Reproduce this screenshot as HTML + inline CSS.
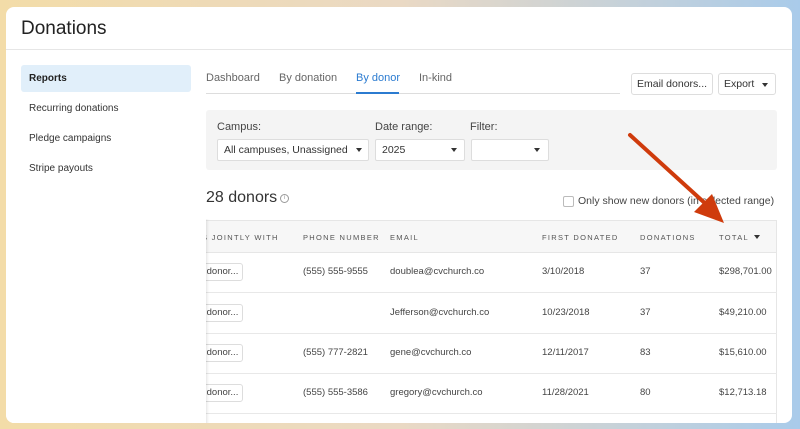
<!DOCTYPE html>
<html><head><meta charset="utf-8"><style>
*{margin:0;padding:0;box-sizing:border-box}
body{width:800px;height:429px;overflow:hidden;font-family:"Liberation Sans",sans-serif;color:#333;background:linear-gradient(90deg,#f3dca8 0%,#ead9c4 50%,#a9cbea 100%);position:relative}
.card{position:absolute;left:6px;top:7px;width:786px;height:416px;background:#fff;border-radius:8px;overflow:hidden}
.abs{position:absolute;white-space:nowrap}
.h1{left:15px;top:11px;font-size:19px;color:#222}
.hb{left:0;top:42px;width:786px;height:1px;background:#e6e6e6}
.side{font-size:10px;color:#333}
.tab{font-size:11px;color:#666;top:65px}
.btn{border:1px solid #ddd;border-radius:3px;background:#fff;font-size:10.5px;color:#333;height:22px;line-height:20px;padding:0 5px;overflow:hidden}
.sel{background:#fff;border:1px solid #ddd;border-radius:2px;height:22px;font-size:10.5px;line-height:20px;padding-left:6px;color:#333;overflow:hidden}
.tri{position:absolute;width:0;height:0;border-left:3px solid transparent;border-right:3px solid transparent;border-top:4px solid #333}
.th{font-size:7.5px;letter-spacing:1.3px;color:#555;top:226px}
.td{font-size:9.5px;color:#444}
.row{left:195px;width:576px;height:1px;background:#e8e8e8}
.dbtn{border:1px solid #ddd;border-radius:3px;height:18px;width:44px;font-size:9.5px;line-height:16px;padding-left:4px;color:#444;background:#fff;overflow:hidden}
</style></head><body>
<div class="card">
<div class="abs h1">Donations</div>
<div class="abs hb"></div>
<div class="abs" style="left:195px;top:213px;width:576px;height:33px;background:#f7f7f7;border-top:1px solid #e6e6e6;border-bottom:1px solid #e6e6e6"></div>
<div class="abs" style="left:770px;top:213px;width:1px;height:210px;background:#e6e6e6"></div>
<div class="abs th" style="left:196px">S JOINTLY WITH</div>
<div class="abs th" style="left:297px">PHONE NUMBER</div>
<div class="abs th" style="left:384px">EMAIL</div>
<div class="abs th" style="left:536px">FIRST DONATED</div>
<div class="abs th" style="left:634px">DONATIONS</div>
<div class="abs th" style="left:713px">TOTAL</div>
<div class="tri" style="left:748px;top:228px"></div>

<div class="abs row" style="top:285px"></div>
<div class="abs row" style="top:326px"></div>
<div class="abs row" style="top:366px"></div>
<div class="abs row" style="top:406px"></div>

<div class="abs dbtn" style="left:193px;top:256px">&nbsp;donor...</div>
<div class="abs dbtn" style="left:193px;top:297px">&nbsp;donor...</div>
<div class="abs dbtn" style="left:193px;top:337px">&nbsp;donor...</div>
<div class="abs dbtn" style="left:193px;top:377px">&nbsp;donor...</div>

<div class="abs td" style="left:297px;top:259px">(555) 555-9555</div>
<div class="abs td" style="left:384px;top:259px">doublea@cvchurch.co</div>
<div class="abs td" style="left:536px;top:259px">3/10/2018</div>
<div class="abs td" style="left:634px;top:259px">37</div>
<div class="abs td" style="left:713px;top:259px">$298,701.00</div>

<div class="abs td" style="left:384px;top:300px">Jefferson@cvchurch.co</div>
<div class="abs td" style="left:536px;top:300px">10/23/2018</div>
<div class="abs td" style="left:634px;top:300px">37</div>
<div class="abs td" style="left:713px;top:300px">$49,210.00</div>

<div class="abs td" style="left:297px;top:340px">(555) 777-2821</div>
<div class="abs td" style="left:384px;top:340px">gene@cvchurch.co</div>
<div class="abs td" style="left:536px;top:340px">12/11/2017</div>
<div class="abs td" style="left:634px;top:340px">83</div>
<div class="abs td" style="left:713px;top:340px">$15,610.00</div>

<div class="abs td" style="left:297px;top:380px">(555) 555-3586</div>
<div class="abs td" style="left:384px;top:380px">gregory@cvchurch.co</div>
<div class="abs td" style="left:536px;top:380px">11/28/2021</div>
<div class="abs td" style="left:634px;top:380px">80</div>
<div class="abs td" style="left:713px;top:380px">$12,713.18</div>

<div class="abs" style="left:0;top:212px;width:200px;height:211px;background:#fff;box-shadow:1px 0 3px rgba(0,0,0,0.12);clip-path:inset(0 -6px 0 0)"></div>

<div class="abs" style="left:15px;top:58px;width:170px;height:27px;background:#e1effa;border-radius:3px"></div>
<div class="abs side" style="left:23px;top:66px;font-weight:bold;color:#222">Reports</div>
<div class="abs side" style="left:23px;top:96px">Recurring donations</div>
<div class="abs side" style="left:23px;top:126px">Pledge campaigns</div>
<div class="abs side" style="left:23px;top:156px">Stripe payouts</div>

<div class="abs" style="left:200px;top:86px;width:414px;height:1px;background:#ddd"></div>
<div class="abs tab" style="left:200px">Dashboard</div>
<div class="abs tab" style="left:273px">By donation</div>
<div class="abs tab" style="left:350px;color:#2b7bd0">By donor</div>
<div class="abs" style="left:350px;top:85px;width:43px;height:2px;background:#2b7bd0"></div>
<div class="abs tab" style="left:413px">In-kind</div>

<div class="abs btn" style="left:625px;top:66px;width:82px">Email donors...</div>
<div class="abs btn" style="left:712px;top:66px;width:58px">Export</div>
<div class="tri" style="left:756px;top:76px"></div>

<div class="abs" style="left:200px;top:103px;width:571px;height:60px;background:#f4f4f4;border-radius:3px"></div>
<div class="abs" style="left:211px;top:114px;font-size:11px;color:#444">Campus:</div>
<div class="abs" style="left:369px;top:114px;font-size:11px;color:#444">Date range:</div>
<div class="abs" style="left:464px;top:114px;font-size:11px;color:#444">Filter:</div>
<div class="abs sel" style="left:211px;top:132px;width:152px">All campuses, Unassigned</div>
<div class="tri" style="left:350px;top:141px"></div>
<div class="abs sel" style="left:369px;top:132px;width:90px">2025</div>
<div class="tri" style="left:445px;top:141px"></div>
<div class="abs sel" style="left:465px;top:132px;width:78px"></div>
<div class="tri" style="left:528px;top:141px"></div>

<div class="abs" style="left:200px;top:182px;font-size:16px;color:#333">28 donors</div>
<div class="abs" style="left:274px;top:187px;width:9px;height:9px;border:1px solid #999;border-radius:50%;font-size:6px;line-height:7px;text-align:center;color:#999">i</div>
<div class="abs" style="left:557px;top:189px;width:11px;height:11px;border:1px solid #bbb;border-radius:2px;background:#fff"></div>
<div class="abs" style="left:572px;top:188px;font-size:10.5px;color:#444">Only show new donors (in selected range)</div>
</div>
<svg class="abs" style="left:0;top:0" width="800" height="429">
<line x1="630" y1="135" x2="708" y2="206" stroke="#cf3b0c" stroke-width="4" stroke-linecap="round"/>
<polygon points="724,223 694,212 712,194" fill="#cf3b0c"/>
</svg>
</body></html>
